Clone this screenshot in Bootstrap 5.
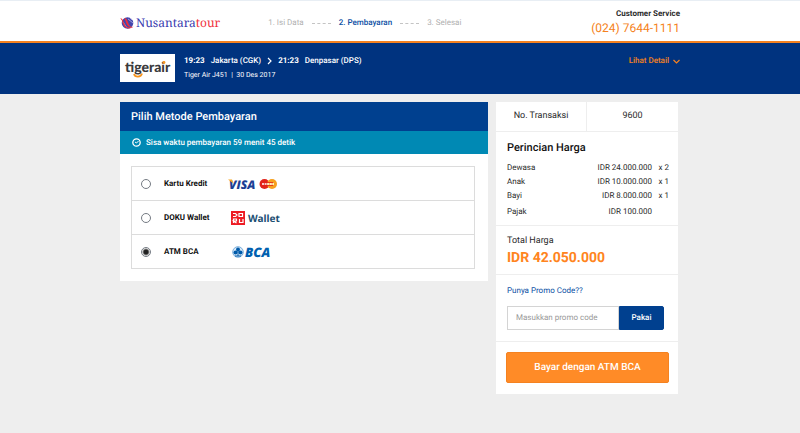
<!DOCTYPE html>
<html lang="id">
<head>
<meta charset="utf-8">
<meta name="viewport" content="width=device-width, initial-scale=1">
<title>Nusantaratour - Pembayaran</title>
<link rel="stylesheet" href="https://cdn.jsdelivr.net/npm/bootstrap@5.3.0/dist/css/bootstrap.min.css">
<style>
body{background:#eee;color:#2b2b2b;font-family:Roboto,"Liberation Sans",sans-serif;font-size:8px;line-height:14px;text-rendering:geometricPrecision}
input,button{text-rendering:inherit}
a{text-decoration:none}
.page-wrap{max-width:560px;width:100%}
.topbar{border-top:1px solid #e8eef4;border-bottom:2px solid #f58220;padding:6px 0}
.brand{font-family:"Noto Serif","Liberation Serif",serif;font-size:12px;line-height:18px;color:#3a3cb0;gap:2px}
.brand em{font-style:normal;color:#f0303c}
.steps{gap:8px;color:#b0b0b0;padding-top:4px}
.steps .now{color:#0b50a4;font-weight:500}
.dash{width:19px;border-top:1px dashed #c4c4c4}
.service{font-weight:700}
.phone{font-size:12px;color:#f58220}
.flight{background:#00337f;color:#fff;padding:11px 0 12px}
.airline{width:55px;height:28px;background:#fff}
.trip{font-weight:500;gap:6px}
.trip b{font-weight:700}
.flight-sub{font-size:7px}
.flight-info{margin-left:9px}
.orange-link,.orange-link:hover{color:#f58220;font-weight:500}
.main-area{padding:8px 2px 8px 0;gap:8px}
.side{width:182px}
.pay-title{background:#00408f;color:#fff;font-size:11px;font-weight:500;line-height:17px;padding:6px 11px}
.timer{background:#0089b4;color:#fff;font-weight:500;line-height:15px;padding:4px 12px;gap:5px}
.pay-body{padding:12px 13px 12px 11px}
.methods{border:1px solid #dcdcdc}
.method{height:33px;padding-left:9px}
.method + .method{height:34px;border-top:1px solid #dcdcdc}
.method label{width:64px;margin-left:13px;color:#111;font-weight:700}
.method .form-check-input{width:10px;height:10px;margin:0;border:1px solid #757b83;background-image:none;box-shadow:none}
.method .form-check-input:checked{background:radial-gradient(circle,#222 0 2px,#fff 4px)}
.trx{font-size:9px;line-height:16px}
.trx > div{padding:6px 0 7px}
.line-b{border-bottom:1px solid #eee}
.line-r{border-right:1px solid #eee}
.block{padding-left:11px;padding-right:11px}
.price-block{padding:8px 9px 5px 11px}
.price-title{font-size:11px;font-weight:500;line-height:16px;color:#111;margin:0 0 5px}
.prices td{padding:0;line-height:14px}
.prices .qty{width:17px}
.prices tr:last-child td{padding-top:1px;line-height:16px}
.total-box{padding-top:7px;padding-bottom:7px}
.total{font-size:14px;font-weight:700;line-height:18px;color:#ff8420}
.promo-block{padding-top:9px;padding-bottom:11px}
.promo-link,.promo-link:hover{color:#0b50a4}
.promo{padding-right:3px}
.promo .form-control{font-size:8px;line-height:14px;padding:4px 8px;border:1px solid #d4d4d4;border-radius:0;min-height:0}
.promo .form-control::placeholder{color:#999}
.promo .btn{width:45px;padding:4px 0;font-size:8px;line-height:14px;font-weight:500;background:#00408f;border-color:#00408f;color:#fff;border-radius:0 2px 2px 0}
.pay-area{padding:10px 9px 11px 10px}
.pay-btn,.pay-btn:hover{background:#ff8b27;border:1px solid #f58220;color:#fff;font-size:10px;font-weight:500;line-height:16px;padding:7px 0 6px;border-radius:2px}
</style>
<script src="https://cdn.jsdelivr.net/npm/bootstrap@5.3.0/dist/js/bootstrap.bundle.min.js"></script>
</head>
<body>
<header class="topbar bg-white">
  <div class="page-wrap mx-auto d-flex align-items-center">
    <a href="#" class="brand d-flex align-items-center pt-1">
      <svg width="14" height="14" viewBox="0 0 14 14" aria-hidden="true">
        <circle cx="7.500" cy="7" r="5.800" fill="#4446ad"/>
        <path d="M9 1l3 3M8 3l5 4M3 6l4 6" stroke="#c4c6f0" stroke-width=".7"/>
        <path d="M0 2.500C3 2 3 5 4.500 8S8 12.500 13.500 10.500C10 14 5 12.500 3.500 9S2.500 4 0 2.500Z" fill="#f0303c"/>
        <path d="M4 2c3 0 3.500 3 4.500 5.500s2 3 4 2.500c-3 2-5 0-6-2.500S5.500 3.500 4 2z" fill="#f0303c"/>
      </svg>
      <span>Nusantara<em>tour</em></span>
    </a>
    <nav class="steps d-flex align-items-center ms-5" aria-label="Langkah">
      <span>1. Isi Data</span><span class="dash"></span>
      <span class="now" aria-current="step">2. Pembayaran</span><span class="dash"></span>
      <span>3. Selesai</span>
    </nav>
    <div class="ms-auto text-end">
      <div class="service">Customer Service</div>
      <div class="phone">(024) 7644-1111</div>
    </div>
  </div>
</header>

<section class="flight">
  <div class="page-wrap mx-auto d-flex align-items-start">
    <div class="airline flex-shrink-0">
      <svg class="d-block" width="55" height="28" viewBox="0 0 55 28" role="img" aria-label="tigerair">
        <text x="5" y="18" font-family="Lato, sans-serif" font-weight="900" font-size="14" fill="#3a3a3c">tigerair</text>
        <path d="M14 20c1 3.500 7 3.500 8-.5" fill="none" stroke="#f7941d" stroke-width="1.800"/>
        <circle cx="44" cy="8.500" r="1.400" fill="#f7941d"/>
      </svg>
    </div>
    <div class="flight-info">
      <div class="trip d-flex align-items-center">
        <b>19:23</b><span>Jakarta (CGK)</span>
        <svg width="5" height="8" viewBox="0 0 5 8" fill="none" stroke="#fff" stroke-width="1.200" aria-hidden="true"><path d="M1 1l3 3-3 3"/></svg>
        <b>21:23</b><span>Denpasar (DPS)</span>
      </div>
      <div class="flight-sub">Tiger Air J451 &nbsp;|&nbsp; 30 Des 2017</div>
    </div>
    <a href="#" class="orange-link ms-auto d-flex align-items-center gap-1">Lihat Detail
      <svg width="7" height="5" viewBox="0 0 7 5" fill="none" stroke="#f58220" stroke-width="1.200" aria-hidden="true"><path d="M.5 1l3 3 3-3"/></svg>
    </a>
  </div>
</section>

<main class="main-area page-wrap mx-auto d-flex align-items-start">
  <section class="bg-white flex-grow-1">
    <h1 class="pay-title m-0">Pilih Metode Pembayaran</h1>
    <div class="timer d-flex align-items-center">
      <svg width="9" height="9" viewBox="0 0 9 9" fill="none" stroke="#fff" aria-hidden="true"><circle cx="4.500" cy="4.500" r="3.700" stroke-width="1.300"/><path d="M3 4l1.500 1L6.500 3" /></svg>
      <span>Sisa waktu pembayaran 59 menit 45 detik</span>
    </div>
    <form class="pay-body">
      <div class="methods">
        <div class="method d-flex align-items-center">
          <input class="form-check-input" type="radio" name="bayar" id="kartu">
          <label for="kartu">Kartu Kredit</label>
          <svg width="50" height="22" viewBox="0 -5 50 22" role="img" aria-label="Visa MasterCard">
            <text x="1" y="10.500" font-family="Open Sans, sans-serif" font-style="italic" font-weight="800" font-size="12" fill="#1c3f94">VISA</text>
            <path d="M0 1.500h4l1.500 4z" fill="#f5a623"/>
            <circle cx="36.500" cy="6" r="5" fill="#e2231a"/><circle cx="44" cy="6" r="5" fill="#f7a01d"/>
            <path d="M36 4.500h9M36 7.500h9" stroke="#e2231a" stroke-width=".8"/>
            <path d="M34 6h12" stroke="#fff" stroke-width="1.500" stroke-dasharray="2 .6"/>
          </svg>
        </div>
        <div class="method d-flex align-items-center">
          <input class="form-check-input" type="radio" name="bayar" id="doku">
          <label for="doku">DOKU Wallet</label>
          <svg width="60" height="22" viewBox="0 -4 60 22" role="img" aria-label="DOKU Wallet">
            <path d="M3 0h14v14H3z" fill="#ed1c24"/>
            <path d="M5 2.500h2.500L9 4 7.500 5.500H5M11 2.500h3.500v3H11zM5.500 12V8h3v2h-3l3 2M11.500 8v3.500H15V8" fill="none" stroke="#fff" stroke-width="1.200"/>
            <text x="20" y="11" font-family="Noto Sans, sans-serif" font-weight="700" font-size="10" fill="#1d4f72">Wallet</text>
          </svg>
        </div>
        <div class="method d-flex align-items-center">
          <input class="form-check-input" type="radio" name="bayar" id="bca" checked>
          <label for="bca">ATM BCA</label>
          <svg width="50" height="22" viewBox="0 -5 50 22" role="img" aria-label="BCA">
            <circle cx="10" cy="6" r="5.300" fill="#d9e9f7" stroke="#5a9ad4" stroke-width=".8"/>
            <path d="M10 10V4M7 10h6" stroke="#005baa"/>
            <circle cx="10" cy="3.500" r="2" fill="#005baa"/><circle cx="7.500" cy="6.500" r="2" fill="#005baa"/><circle cx="12.500" cy="6.500" r="2" fill="#005baa"/>
            <text x="17" y="11" font-family="Open Sans, sans-serif" font-style="italic" font-weight="800" font-size="13" fill="#0060af">BCA</text>
          </svg>
        </div>
      </div>
    </form>
  </section>

  <aside class="side bg-white flex-shrink-0">
    <div class="trx d-flex text-center line-b">
      <div class="w-50 line-r">No. Transaksi</div><div class="w-50">9600</div>
    </div>
    <div class="price-block line-b">
      <h2 class="price-title">Perincian Harga</h2>
      <table class="prices w-100">
        <tr><td>Dewasa</td><td class="text-end">IDR 24.000.000</td><td class="qty text-end">x 2</td></tr>
        <tr><td>Anak</td><td class="text-end">IDR 10.000.000</td><td class="qty text-end">x 1</td></tr>
        <tr><td>Bayi</td><td class="text-end">IDR 8.000.000</td><td class="qty text-end">x 1</td></tr>
        <tr><td>Pajak</td><td class="text-end">IDR 100.000</td><td></td></tr>
      </table>
    </div>
    <div class="block line-b total-box">
      <div class="trx">Total Harga</div>
      <div class="total">IDR 42.050.000</div>
    </div>
    <form class="block line-b promo-block">
      <a href="#" class="promo-link d-block mb-2">Punya Promo Code??</a>
      <div class="promo d-flex">
        <input class="form-control" type="text" aria-label="Kode promo" placeholder="Masukkan promo code">
        <button type="button" class="btn flex-shrink-0">Pakai</button>
      </div>
    </form>
    <div class="pay-area">
      <button type="button" class="btn pay-btn w-100">Bayar dengan ATM BCA</button>
    </div>
  </aside>
</main>
</body>
</html>
